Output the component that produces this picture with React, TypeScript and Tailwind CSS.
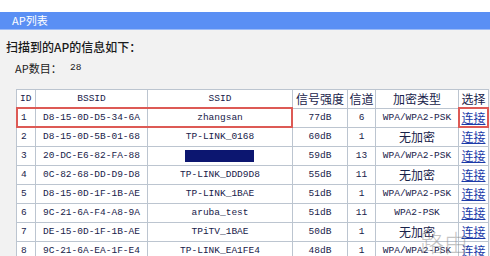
const rows = [
  { id: '1', bssid: 'D8-15-0D-D5-34-6A', ssid: 'zhangsan', db: '77dB', ch: '6', enc: 'WPA/WPA2-PSK' },
  { id: '2', bssid: 'D8-15-0D-5B-01-68', ssid: 'TP-LINK_0168', db: '60dB', ch: '1', enc: '无加密' },
  { id: '3', bssid: '20-DC-E6-82-FA-88', ssid: '', db: '59dB', ch: '13', enc: 'WPA/WPA2-PSK' },
  { id: '4', bssid: '0C-82-68-DD-D9-D8', ssid: 'TP-LINK_DDD9D8', db: '55dB', ch: '11', enc: '无加密' },
  { id: '5', bssid: 'D8-15-0D-1F-1B-AE', ssid: 'TP-LINK_1BAE', db: '51dB', ch: '1', enc: 'WPA/WPA2-PSK' },
  { id: '6', bssid: '9C-21-6A-F4-A8-9A', ssid: 'aruba_test', db: '51dB', ch: '11', enc: 'WPA2-PSK' },
  { id: '7', bssid: 'DE-15-0D-1F-1B-AE', ssid: 'TPiTV_1BAE', db: '50dB', ch: '1', enc: '无加密' },
  { id: '8', bssid: '9C-21-6A-EA-1F-E4', ssid: 'TP-LINK_EA1FE4', db: '48dB', ch: '1', enc: 'WPA/WPA2-PSK' },
];

const mono = "font-['Liberation_Mono',monospace] text-[9.5px] leading-none";
const cjk = "font-['Noto_Sans_CJK_SC',sans-serif] text-[12px] leading-none";
const cell = 'border border-[#bcc5d0] p-0 align-middle';

export default function App() {
  return (
    <div className="relative h-[256px] w-[490px] overflow-hidden bg-white text-[#18224a]">
      {/* 상단 여백 + 파란 타이틀 바 */}
      <div className="h-[12px] bg-white" />
      <div className="flex h-[17px] items-center bg-[#5a8ff4] pl-[12px] font-['Noto_Sans_CJK_SC',sans-serif] text-[11px] text-white">
        AP列表
      </div>
      <div className="h-px bg-[#9dbbf6]" />

      <div className="h-[226px] bg-[#f2f2f2] pt-[11px]">
        <div className="h-[12px] pl-[6px] font-['Noto_Sans_CJK_SC',sans-serif] text-[12px] font-medium leading-[12px] text-[#1a1a1a]">
          扫描到的AP的信息如下：
        </div>
        <div className="mt-[9px] flex h-[12px] items-center pl-[15px] font-['Noto_Sans_CJK_SC',sans-serif] text-[11px] leading-[12px] text-[#1a1a1a]">
          <span className="w-[55px]">AP数目：</span>
          <span className={mono}>28</span>
        </div>

        <table className="mt-[15px] ml-[16px] w-[472px] table-fixed border-collapse bg-white">
          <colgroup>
            <col className="w-[19px]" />
            <col className="w-[112px]" />
            <col className="w-[145px]" />
            <col className="w-[55px]" />
            <col className="w-[28px]" />
            <col className="w-[83px]" />
            <col className="w-[30px]" />
          </colgroup>
          <thead>
            <tr className="h-[19px]">
              <th className={`${cell} ${mono} pl-[3px] text-left font-normal`}>ID</th>
              <th className={`${cell} ${mono} font-normal`}>BSSID</th>
              <th className={`${cell} ${mono} font-normal`}>SSID</th>
              <th className={`${cell} ${cjk} font-normal`}>信号强度</th>
              <th className={`${cell} ${cjk} font-normal`}>信道</th>
              <th className={`${cell} ${cjk} font-normal`}>加密类型</th>
              <th className={`${cell} ${cjk} font-normal`}>选择</th>
            </tr>
          </thead>
          <tbody>
            {rows.map((r) => (
              <tr key={r.id} className="h-[19px]">
                <td className={`${cell} ${mono} pl-[4px] text-left`}>{r.id}</td>
                <td className={`${cell} ${mono} text-center`}>{r.bssid}</td>
                <td className={`${cell} ${mono} text-center`}>
                  {r.id === '3' ? (
                    <div className="ml-[37px] h-[12px] w-[69px] bg-[#0c1670]" />
                  ) : (
                    r.ssid
                  )}
                </td>
                <td className={`${cell} ${mono} text-center`}>{r.db}</td>
                <td className={`${cell} ${mono} text-center`}>{r.ch}</td>
                <td className={`${cell} text-center ${r.enc === '无加密' ? cjk : mono}`}>{r.enc}</td>
                <td className={`${cell} ${cjk} text-center text-[#1a3aa8] underline`}>连接</td>
              </tr>
            ))}
          </tbody>
        </table>
      </div>

      {/* 선택된 행 강조 */}
      <div className="absolute top-[107px] left-[16px] h-[21px] w-[277px] border-2 border-[#dd5a55]" />
      <div className="absolute top-[107px] left-[458px] h-[21px] w-[31px] border-2 border-[#dd5a55]" />

      {/* 워터마크 */}
      <div className="absolute top-[230px] left-[420px] font-['Noto_Sans_CJK_SC',sans-serif] text-[24px] font-light leading-none text-[#8a8a8a]/50">
        路由器
      </div>
    </div>
  );
}
